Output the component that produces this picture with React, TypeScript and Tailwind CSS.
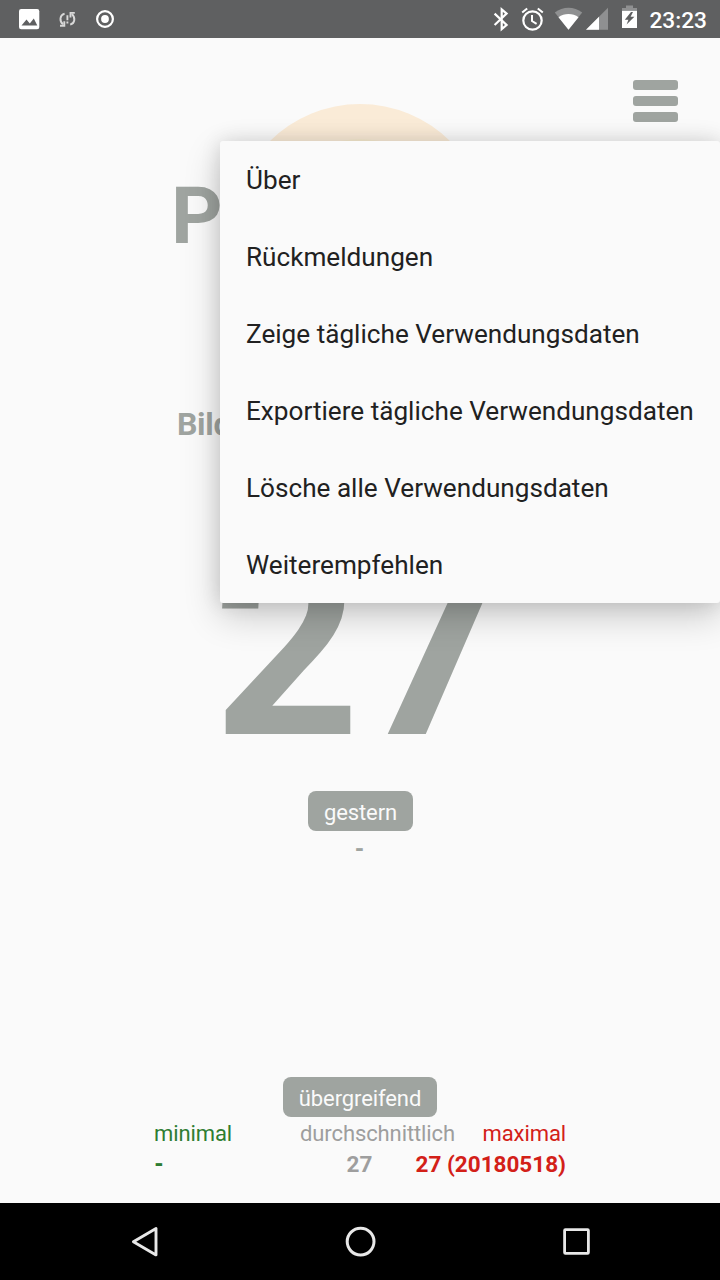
const menuItems = [
  'Über',
  'Rückmeldungen',
  'Zeige tägliche Verwendungsdaten',
  'Exportiere tägliche Verwendungsdaten',
  'Lösche alle Verwendungsdaten',
  'Weiterempfehlen',
];

function StatusBar() {
  return (
    <header className="flex h-[38px] items-center justify-between bg-[#5f6061] text-white">
      <svg className="h-[38px] w-[130px]" viewBox="0 0 130 38" fill="none">
        <rect x="19" y="9" width="20.3" height="20.3" rx="2.2" fill="#fff" />
        <path d="M21.5 25.5l5-6 3.3 4 4-5 3.5 7z" fill="#5f6061" />
        <g stroke="#d8d8d8" strokeWidth="1.9">
          <path d="M64.6 13.6c-5 1.5-5.4 7.3-1.6 10.8M70.2 24.6c5-1.5 5.4-7.2 1.6-10.6" />
          <path d="M60 25.8h4.3v-4.6M74.8 12.9h-4.3v4.6M67.4 15.3v5M67.4 21.6v2" />
        </g>
        <circle cx="105" cy="19" r="7.9" stroke="#fff" strokeWidth="2.2" />
        <circle cx="105" cy="19" r="3.9" fill="#fff" />
      </svg>
      <div className="flex h-full items-center pr-[13px]">
        <svg className="h-[38px] w-[157px] shrink-0" viewBox="490 0 157 38" fill="none">
          <path
            d="M494.6 13.6l12 11.4-4.9 4.2V9.4l4.9 4.2-12 11.4"
            stroke="#fff"
            strokeWidth="2.2"
          />
          <circle cx="532.5" cy="20.5" r="9.2" stroke="#fff" strokeWidth="2.2" />
          <path
            d="M532 15v6l4.6 2.8M522.2 12.6l5-4.2M542.8 12.6l-5-4.2"
            stroke="#fff"
            strokeWidth="2"
          />
          <path d="M568.5 29.8L554.8 12.6C562.8 6.2 574.2 6.2 582.2 12.6z" fill="#8f9091" />
          <path d="M568.5 29.8L558.5 17.2C564.2 12.9 572.8 12.9 578.5 17.2z" fill="#fff" />
          <path d="M586 29.8L608 7.8v22z" fill="#8f9091" />
          <path d="M586 29.8L599 16.8v13z" fill="#fff" />
          <path d="M622 10.8V8h4V5.5h7V8h4v2.8z" fill="#8f9091" />
          <path d="M622 10.8h15V28h-15z" fill="#fff" />
          <path d="M631 12l-6.2 7.8h3.6l-1.8 4.7 7.8-7.8h-3.8l2.4-4.7z" fill="#5f6061" />
        </svg>
        <span className="mt-[3px] w-[60px] text-right text-[22.7px] leading-[26px] font-medium">23:23</span>
      </div>
    </header>
  );
}

function Pill({ children }: { children: string }) {
  return (
    <span className="flex h-10 items-center rounded-lg bg-[#9fa4a0] px-4 pt-[3px] text-[22px] leading-[26px] tracking-[-0.1px] text-[#fafafa]">
      {children}
    </span>
  );
}

function OverflowMenu() {
  return (
    <ul className="absolute top-[141px] left-[220px] w-[500px] rounded-[3px] bg-[#fafafa] shadow-[0_13px_36px_rgba(0,0,0,0.2),0_0_20px_rgba(0,0,0,0.12)]">
      {menuItems.map((item) => (
        <li
          key={item}
          className="flex h-[77px] items-center px-[26px] pt-px text-[26.15px] leading-[30px] whitespace-nowrap text-[#212121]"
        >
          {item}
        </li>
      ))}
    </ul>
  );
}

function NavigationBar() {
  return (
    <nav className="h-[77px] bg-black">
      <svg className="h-[77px] w-[720px]" viewBox="0 0 720 77" fill="none" stroke="#e8e8e8">
        <path d="M133.4 38.7L156 25.5v26.4z" strokeWidth="2.9" strokeLinejoin="round" />
        <circle cx="360.6" cy="38.6" r="13.4" strokeWidth="3" />
        <rect x="564.6" y="26.6" width="23.8" height="23.8" rx="0.8" strokeWidth="2.8" />
      </svg>
    </nav>
  );
}

export default function App() {
  return (
    <div
      className="relative flex h-[1280px] w-[720px] flex-col overflow-hidden bg-[#fafafa]"
      style={{ fontFamily: 'Roboto, "Liberation Sans", sans-serif' }}
    >
      <StatusBar />
      <main className="flex min-h-0 flex-1 flex-col text-[#9fa4a0]">
        <div className="flex h-[66px] justify-end pt-[42px] pr-[42px]">
          <div className="flex h-[42px] w-[45px] flex-col gap-1.5">
            <span className="h-2.5 shrink-0 rounded-[3px] bg-[#9fa4a0]" />
            <span className="h-2.5 shrink-0 rounded-[3px] bg-[#9fa4a0]" />
            <span className="h-2.5 shrink-0 rounded-[3px] bg-[#9fa4a0]" />
          </div>
        </div>
        <div className="grid h-64 grid-cols-1 grid-rows-1">
          <div className="col-start-1 row-start-1 flex size-64 items-center justify-center justify-self-center rounded-full bg-[#faebd7]">
            <div className="size-[186px] rounded-full bg-[#f8ebd0]" />
          </div>
          <h1 className="col-start-1 row-start-1 pt-[64px] pl-[171px] text-[80px] leading-[96px] font-bold">
            P
          </h1>
        </div>
        <p className="mt-[44px] pl-[177px] text-[32px] leading-[40px] font-bold tracking-[-0.3px]">Bild</p>
        <div className="mt-[69px] h-[278px] text-center text-[256px] leading-[268px] font-bold">27</div>
        <section className="flex flex-col items-center pl-px">
          <Pill>gestern</Pill>
          <span className="mt-1 pr-0.5 text-[22.4px] leading-[26px] font-black">-</span>
        </section>
        <section className="mt-auto flex h-[126px] flex-col items-center">
          <Pill>übergreifend</Pill>
          <div className="grid w-[412px] grid-cols-[146px_155px_111px] pt-1 text-[22px] leading-[26px] tracking-[-0.1px]">
            <div className="flex flex-col gap-1 text-[#2e7d32]">
              <span>minimal</span>
              <b className="font-black">-</b>
            </div>
            <div className="flex flex-col items-center gap-1 text-[#9e9e9e]">
              <span>durchschnittlich</span>
              <b className="pr-9 text-[22.5px] tracking-normal">27</b>
            </div>
            <div className="flex flex-col items-end gap-1 whitespace-nowrap text-[#d32018]">
              <span>maximal</span>
              <b className="text-[22.5px] tracking-normal">27 (20180518)</b>
            </div>
          </div>
        </section>
      </main>
      <NavigationBar />
      <OverflowMenu />
    </div>
  );
}
